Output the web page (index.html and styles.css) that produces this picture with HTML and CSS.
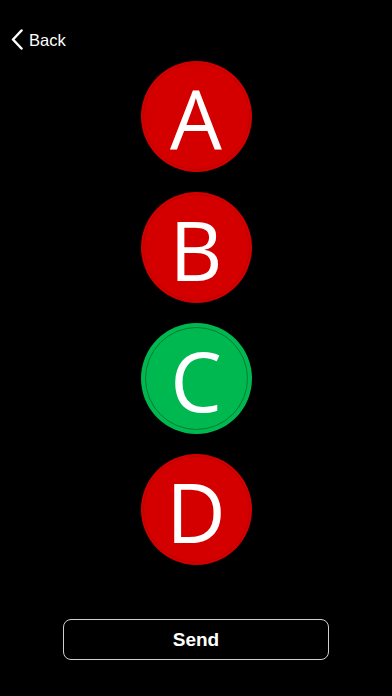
FILE: index.html
```html
<!DOCTYPE html>
<html>
<head>
<meta charset="utf-8">
<link rel="stylesheet" href="styles.css">
</head>
<body>
<div class="screen">
  <div class="nav">
    <a class="back">
      <svg class="chev" width="14" height="22" viewBox="0 0 14 22">
        <polyline points="10.5,1.5 2,10.5 10.5,19.5" fill="none" stroke="#fff" stroke-width="2.5" stroke-linecap="round" stroke-linejoin="round"/>
      </svg>
      <span>Back</span>
    </a>
  </div>
  <div class="options">
    <div class="opt red"><span>A</span></div>
    <div class="opt red"><span>B</span></div>
    <div class="opt green"><span>C</span></div>
    <div class="opt red"><span>D</span></div>
  </div>
  <button class="send">Send</button>
</div>
</body>
</html>
```

FILE: styles.css
```css
html, body {
  margin: 0;
  padding: 0;
  background: #000;
}
.screen {
  width: 392px;
  height: 696px;
  display: flex;
  flex-direction: column;
  align-items: center;
  background: #000;
}
.nav {
  align-self: stretch;
  height: 22px;
  padding: 29px 0 0 11px;
  display: flex;
  align-items: center;
}
.back {
  display: flex;
  align-items: center;
  gap: 4px;
  color: #fff;
  font-family: "Liberation Sans", Arial, sans-serif;
  font-size: 16.5px;
}
.chev {
  display: block;
}
.options {
  margin-top: 10px;
  display: flex;
  flex-direction: column;
  gap: 20px;
}
.opt {
  width: 111px;
  height: 111px;
  border-radius: 50%;
  display: flex;
  align-items: center;
  justify-content: center;
  position: relative;
  color: #fff;
  font-family: "Open Sans", "Noto Sans", sans-serif;
  font-size: 82px;
  line-height: 1;
}
.opt span {
  position: relative;
  top: 1px;
}
.red {
  background: #d40000;
}
.red::before {
  content: "";
  position: absolute;
  inset: 2px;
  border-radius: 50%;
  border: 1px solid #bf0000;
}
.green {
  background: #00b850;
}
.green::before {
  content: "";
  position: absolute;
  inset: 4px;
  border-radius: 50%;
  border: 1px solid #0a7a34;
}
.send {
  margin-top: 54px;
  width: 266px;
  height: 41px;
  background: #000;
  border: 1px solid #cfcfcf;
  border-radius: 8px;
  color: #fff;
  font-family: "Liberation Sans", Arial, sans-serif;
  font-weight: bold;
  font-size: 19px;
  padding: 0;
}
```
